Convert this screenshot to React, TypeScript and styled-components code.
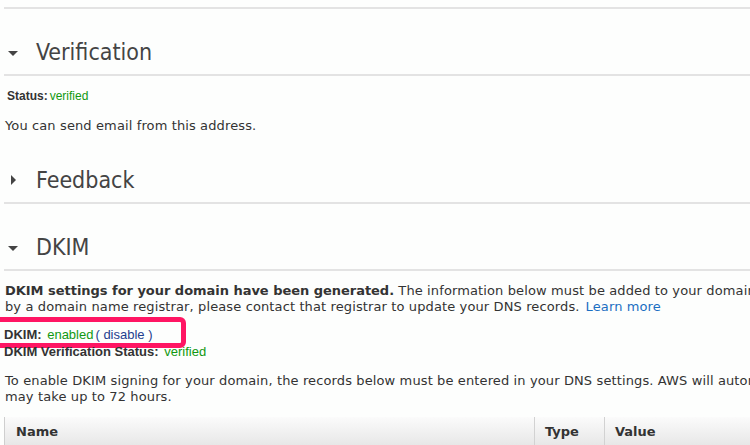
import React from "react";
import styled, { createGlobalStyle } from "styled-components";

const GlobalStyle = createGlobalStyle`
  html, body {
    margin: 0;
    padding: 0;
    overflow: hidden;
    background: #fdfefd;
  }
  body {
    font-family: "DejaVu Sans", Verdana, sans-serif;
    font-size: 13px;
    color: #333;
  }
`;

const Page = styled.div`
  width: 1100px;
  margin-left: 4px;
`;

const Divider = styled.div`
  margin-top: 7px;
  border-top: 2px solid #e3e3e3;
`;

const HeaderRow = styled.div<{ $gap?: number }>`
  display: flex;
  align-items: center;
  height: 65px;
  box-sizing: content-box;
  border-bottom: 2px solid #e3e3e3;
  margin-top: ${(p) => p.$gap ?? 0}px;
`;

const HeaderTitle = styled.h2`
  margin: 0;
  padding: 29px 0 8px 0;
  font-family: "DejaVu Sans Condensed", "DejaVu Sans", sans-serif;
  font-weight: normal;
  font-size: 23px;
  line-height: 28px;
  color: #444;
`;

const Caret = styled.span<{ $open: boolean }>`
  width: 32px;
  align-self: flex-start;
  margin-top: ${(p) => (p.$open ? "42px" : "38px")};
  display: flex;
  padding-left: ${(p) => (p.$open ? "4px" : "7px")};
  box-sizing: border-box;
  &::before {
    content: "";
    display: block;
    width: 0;
    height: 0;
    ${(p) =>
      p.$open
        ? `border-left: 5px solid transparent;
           border-right: 5px solid transparent;
           border-top: 5px solid #444;`
        : `border-top: 5px solid transparent;
           border-bottom: 5px solid transparent;
           border-left: 5px solid #444;`}
  }
`;

const StatusLine = styled.div<{ $top: number; $size: number; $indent?: number }>`
  font-family: "Liberation Sans", Arial, sans-serif;
  font-size: ${(p) => p.$size}px;
  line-height: 17px;
  margin-top: ${(p) => p.$top}px;
  padding-left: ${(p) => p.$indent ?? 0}px;
  color: #333;
  white-space: nowrap;
  position: relative;
`;

const Label = styled.b`
  font-weight: bold;
  margin-right: 2px;
`;

const Ok = styled.span`
  color: #119911;
`;

const Action = styled.span`
  color: #1f3f8f;
  margin-left: 2px;
`;

const Para = styled.p<{ $top: number }>`
  margin: ${(p) => p.$top}px 0 0 0;
  padding-left: 1px;
  line-height: 16px;
  letter-spacing: 0.12px;
  white-space: nowrap;
  color: #333;
`;

const Strong = styled.b`
  font-weight: bold;
  letter-spacing: -0.03px;
`;

const Link = styled.a`
  color: #1b6fc2;
  text-decoration: none;
  margin-left: 6px;
`;

const Highlight = styled.div`
  position: absolute;
  left: -14px;
  top: -9px;
  width: 196px;
  height: 31px;
  box-sizing: border-box;
  border: 5px solid #ff1563;
  border-radius: 6px;
  pointer-events: none;
`;

const Table = styled.div`
  margin-top: 12px;
  display: grid;
  grid-template-columns: 529px 70px 1fr;
  border-left: 1px solid #cfcfcf;
  background: linear-gradient(#fbfbfb, #e3e3e3);
  height: 34px;
`;

const Th = styled.div<{ $sep?: boolean }>`
  font-weight: bold;
  color: #333;
  line-height: 16px;
  padding: 7px 0 0 ${(p) => (p.$sep ? 10 : 11)}px;
  border-left: ${(p) => (p.$sep ? "1px solid #d2d2d2" : "none")};
`;

function Section({ title, open, gap }: { title: string; open: boolean; gap?: number }) {
  return (
    <HeaderRow $gap={gap}>
      <Caret $open={open} />
      <HeaderTitle>{title}</HeaderTitle>
    </HeaderRow>
  );
}

export default function App() {
  return (
    <>
      <GlobalStyle />
      <Page>
        <Divider />
        <Section title="Verification" open />
        <StatusLine $top={12} $size={12} $indent={3}>
          <Label>Status:</Label>
          <Ok>verified</Ok>
        </StatusLine>
        <Para $top={13}>You can send email from this address.</Para>
        <Section title="Feedback" open={false} gap={3} />
        <Section title="DKIM" open />
        <Para $top={12}>
          <Strong>DKIM settings for your domain have been generated.</Strong> The information below
          must be added to your domain's DNS settings. If your DNS is managed
          <br />
          by a domain name registrar, please contact that registrar to update your DNS records.
          <Link href="#">Learn more</Link>
        </Para>
        <StatusLine $top={11} $size={13}>
          <Highlight />
          <Label>DKIM:</Label> <Ok>enabled</Ok>
          <Action>( disable )</Action>
        </StatusLine>
        <StatusLine $top={0} $size={13}>
          <Label>DKIM Verification Status:</Label> <Ok>verified</Ok>
        </StatusLine>
        <Para $top={13}>
          To enable DKIM signing for your domain, the records below must be entered in your DNS
          settings. AWS will automatically detect the presence of these records, and allow DKIM
          <br />
          may take up to 72 hours.
        </Para>
        <Table>
          <Th>Name</Th>
          <Th $sep>Type</Th>
          <Th $sep>Value</Th>
        </Table>
      </Page>
    </>
  );
}
